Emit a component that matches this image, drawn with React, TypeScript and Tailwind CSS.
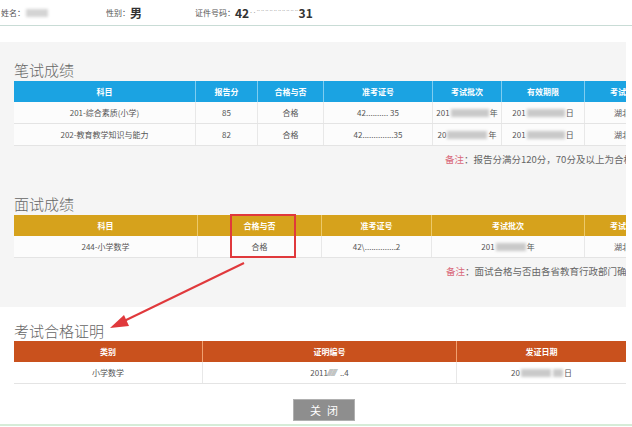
import React from "react";

const font = { fontFamily: '"Noto Sans CJK SC", "Noto Sans", sans-serif' };

function Blur({ w }: { w: number }) {
  return (
    <span
      className="inline-block h-[8px] bg-[#c9c9c9] blur-[1.5px] align-middle mx-[1px]"
      style={{ width: w }}
    />
  );
}

type Col = { w: number; head: string };

function Table({
  cols,
  rows,
  head,
  headBorder,
}: {
  cols: Col[];
  rows: React.ReactNode[][];
  head: string;
  headBorder: string;
}) {
  return (
    <div className="flex flex-col w-[700px]">
      <div className={`flex h-[21px] ${head}`}>
        {cols.map((c, i) => (
          <div
            key={i}
            className={`flex items-center justify-center text-[8px] font-bold text-white border-r ${headBorder}`}
            style={{ width: c.w }}
          >
            {c.head}
          </div>
        ))}
      </div>
      {rows.map((r, ri) => (
        <div key={ri} className="flex h-[22px] border-b border-[#e4e4e4] bg-[#fcfcfc]">
          {r.map((cell, ci) => (
            <div
              key={ci}
              className="flex items-center justify-center text-[8px] text-[#555] border-r border-[#e8e8e8]"
              style={{ width: cols[ci].w }}
            >
              {cell}
            </div>
          ))}
        </div>
      ))}
    </div>
  );
}

export default function App() {
  return (
    <div className="relative w-[632px] h-[427px] overflow-hidden bg-white" style={font}>
      {/* top info bar */}
      <div className="flex items-center h-[26px] border-b border-[#c9dcd6] text-[#555]">
        <div className="w-[106px] pl-[1px] text-[8px] flex items-center">
          姓名：
          <span className="inline-block w-[22px] h-[8px] bg-[#d4d4d4] blur-[1.5px] ml-[1px]" />
        </div>
        <div className="w-[89px] text-[8px] flex items-center">
          性别：<span className="text-[12px] font-bold text-[#333]">男</span>
        </div>
        <div className="text-[8px] flex items-center">
          证件号码：<span className="text-[12px] font-bold text-[#333]">42</span>
          <span className="text-[7px] text-[#999]">‥¨¨¨¨¨¨¨¨¨¨</span>
          <span className="text-[12px] font-bold text-[#333]">31</span>
        </div>
      </div>

      {/* gray panel */}
      <div className="w-[626px] bg-[#f5f5f5] mt-[16px] h-[265px] pl-[14px] pt-[19px] overflow-hidden">
        <div className="text-[15px] leading-[18px] text-[#666] font-light h-[20px]">笔试成绩</div>
        <Table
          head="bg-[#1ba3e2]"
          headBorder="border-[#7fcdf0]"
          cols={[
            { w: 182, head: "科目" },
            { w: 62, head: "报告分" },
            { w: 66, head: "合格与否" },
            { w: 109, head: "准考证号" },
            { w: 69, head: "考试批次" },
            { w: 83, head: "有效期限" },
            { w: 75, head: "考试省" },
          ]}
          rows={[
            [
              "201-综合素质(小学)",
              "85",
              "合格",
              <span>42..........&nbsp;35</span>,
              <span className="flex items-center">201<Blur w={38} />年</span>,
              <span className="flex items-center">201<Blur w={38} />日</span>,
              "湖北",
            ],
            [
              "202-教育教学知识与能力",
              "82",
              "合格",
              <span>42..............35</span>,
              <span className="flex items-center">20<Blur w={40} />年</span>,
              <span className="flex items-center">201<Blur w={38} />日</span>,
              "湖北",
            ],
          ]}
        />
        <div className="flex h-[20px] items-center mt-[3px] pl-[431px] text-[9.5px] text-[#666] whitespace-nowrap w-[800px]">
          <span className="text-[#d9687a]">备注</span>：报告分满分120分，70分及以上为合格
        </div>

        <div className="text-[15px] leading-[18px] text-[#666] font-light mt-[26px] h-[20px]">面试成绩</div>
        <Table
          head="bg-[#d6a21c]"
          headBorder="border-[#ecc96a]"
          cols={[
            { w: 184, head: "科目" },
            { w: 124, head: "合格与否" },
            { w: 110, head: "准考证号" },
            { w: 153, head: "考试批次" },
            { w: 75, head: "考试省" },
          ]}
          rows={[
            [
              "244-小学数学",
              "合格",
              <span>42\..............2</span>,
              <span className="flex items-center">201<Blur w={30} />年</span>,
              "湖北",
            ],
          ]}
        />
        <div className="flex h-[20px] items-center mt-[3px] pl-[432px] text-[9.5px] text-[#666] whitespace-nowrap w-[800px]">
          <span className="text-[#d9687a]">备注</span>：面试合格与否由各省教育行政部门确定
        </div>
      </div>

      {/* certificate */}
      <div className="pl-[14px] pt-[15px] w-[626px] overflow-hidden">
        <div className="text-[15px] leading-[18px] text-[#666] font-light h-[19px]">考试合格证明</div>
        <div className="flex flex-col w-[612px]">
          <div className="flex h-[21px] bg-[#c9511d]">
            <div className="w-[189px] border-r border-[#f0a070] flex items-center justify-center text-[8px] font-bold text-white">类别</div>
            <div className="w-[254px] border-r border-[#f0a070] flex items-center justify-center text-[8px] font-bold text-white">证明编号</div>
            <div className="flex-1 flex items-center justify-center text-[8px] font-bold text-white">发证日期</div>
          </div>
          <div className="flex h-[22px] border-b border-[#e4e4e4] text-[8px] text-[#555]">
            <div className="w-[189px] border-r border-[#e8e8e8] flex items-center justify-center">小学数学</div>
            <div className="w-[254px] border-r border-[#e8e8e8] flex items-center justify-center">2011<span className="text-[#999]">⁄⁄⁄⁄⁄⁄⁄⁄</span>&nbsp;&nbsp;..4</div>
            <div className="flex-1 flex items-center justify-center">20<Blur w={30} /><Blur w={10} />日</div>
          </div>
        </div>
        <div className="flex justify-center w-[648px] mt-[15px] -ml-[14px]">
          <button className="w-[62px] h-[22px] bg-[#8e8e8e] border border-[#b0b0b0] text-white text-[11px] tracking-[6px] pl-[6px] flex items-center justify-center">
            关闭
          </button>
        </div>
      </div>
      <div className="absolute left-0 right-0 top-[424px] h-[2px] bg-[#d6ecd8]" />

      {/* red highlight box */}
      <div className="absolute left-[230px] top-[214px] w-[66px] h-[44px] border-2 border-[#e0393c]" />
      {/* arrow */}
      <svg className="absolute left-0 top-0" width="632" height="427" viewBox="0 0 632 427">
        <line x1="244" y1="263" x2="120" y2="323" stroke="#e0393c" strokeWidth="2" />
        <polygon points="110,328 124,315 129,326" fill="#e0393c" />
      </svg>
    </div>
  );
}
